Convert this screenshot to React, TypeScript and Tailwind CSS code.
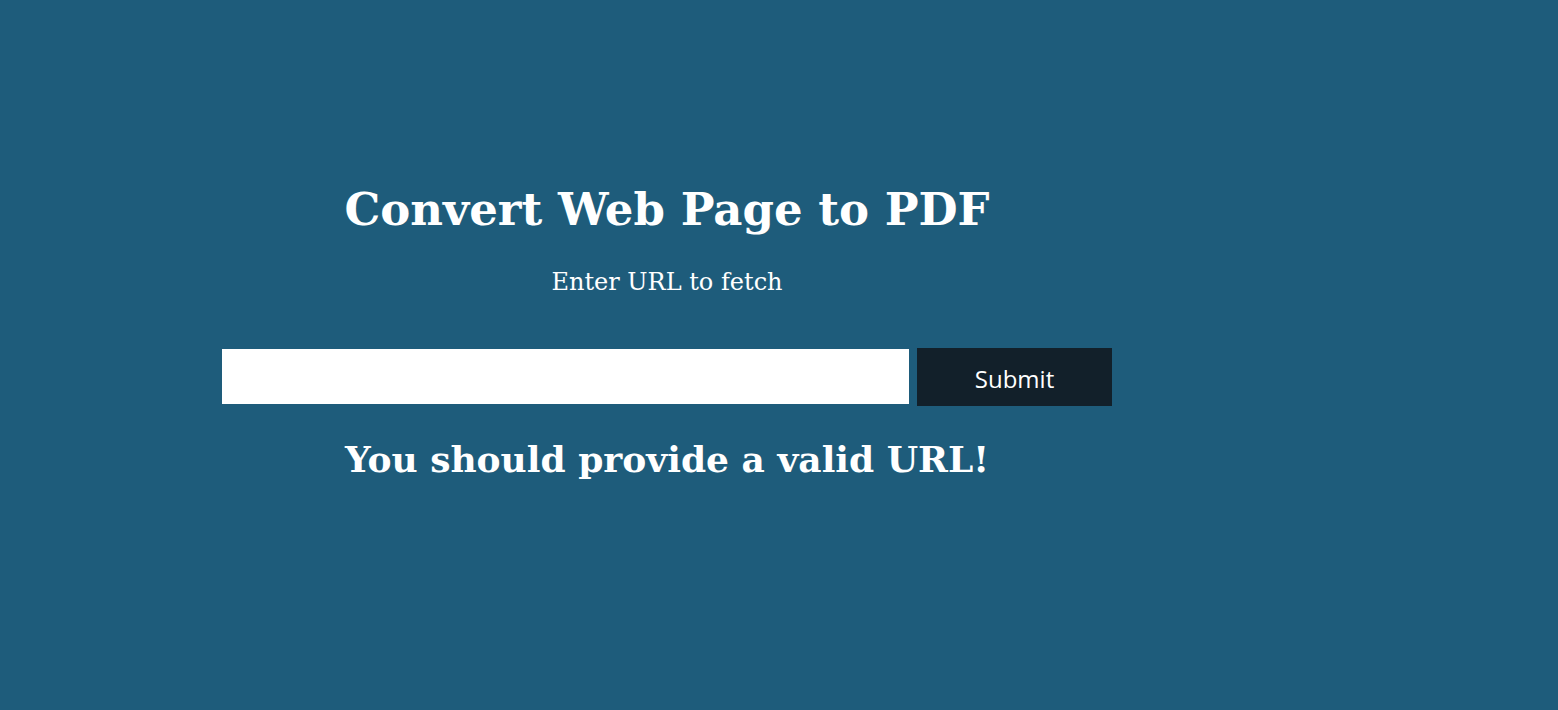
export default function App() {
  return (
    <div className="min-h-[710px] w-full bg-[#1e5c7b] text-white font-['DejaVu_Serif',serif]">
      <div className="w-[1334px] flex flex-col items-center pt-[180px]">
        <h1 className="text-[45px] font-bold leading-[60px]">Convert Web Page to PDF</h1>
        <p className="mt-[28px] text-[24px] leading-[28px]">Enter URL to fetch</p>
        <form className="mt-[52px] flex items-start gap-2" onSubmit={e => e.preventDefault()}>
          <input type="text" className="mt-px w-[687px] h-[55px] bg-white text-black px-3 outline-none" />
          <button type="submit" className="w-[195px] h-[58px] pt-[4px] bg-[#12202a] text-[24px] font-['Open_Sans',sans-serif] text-white">
            Submit
          </button>
        </form>
        <p className="mt-[31px] text-[36px] font-bold leading-[44px]">You should provide a valid URL!</p>
      </div>
    </div>
  );
}
